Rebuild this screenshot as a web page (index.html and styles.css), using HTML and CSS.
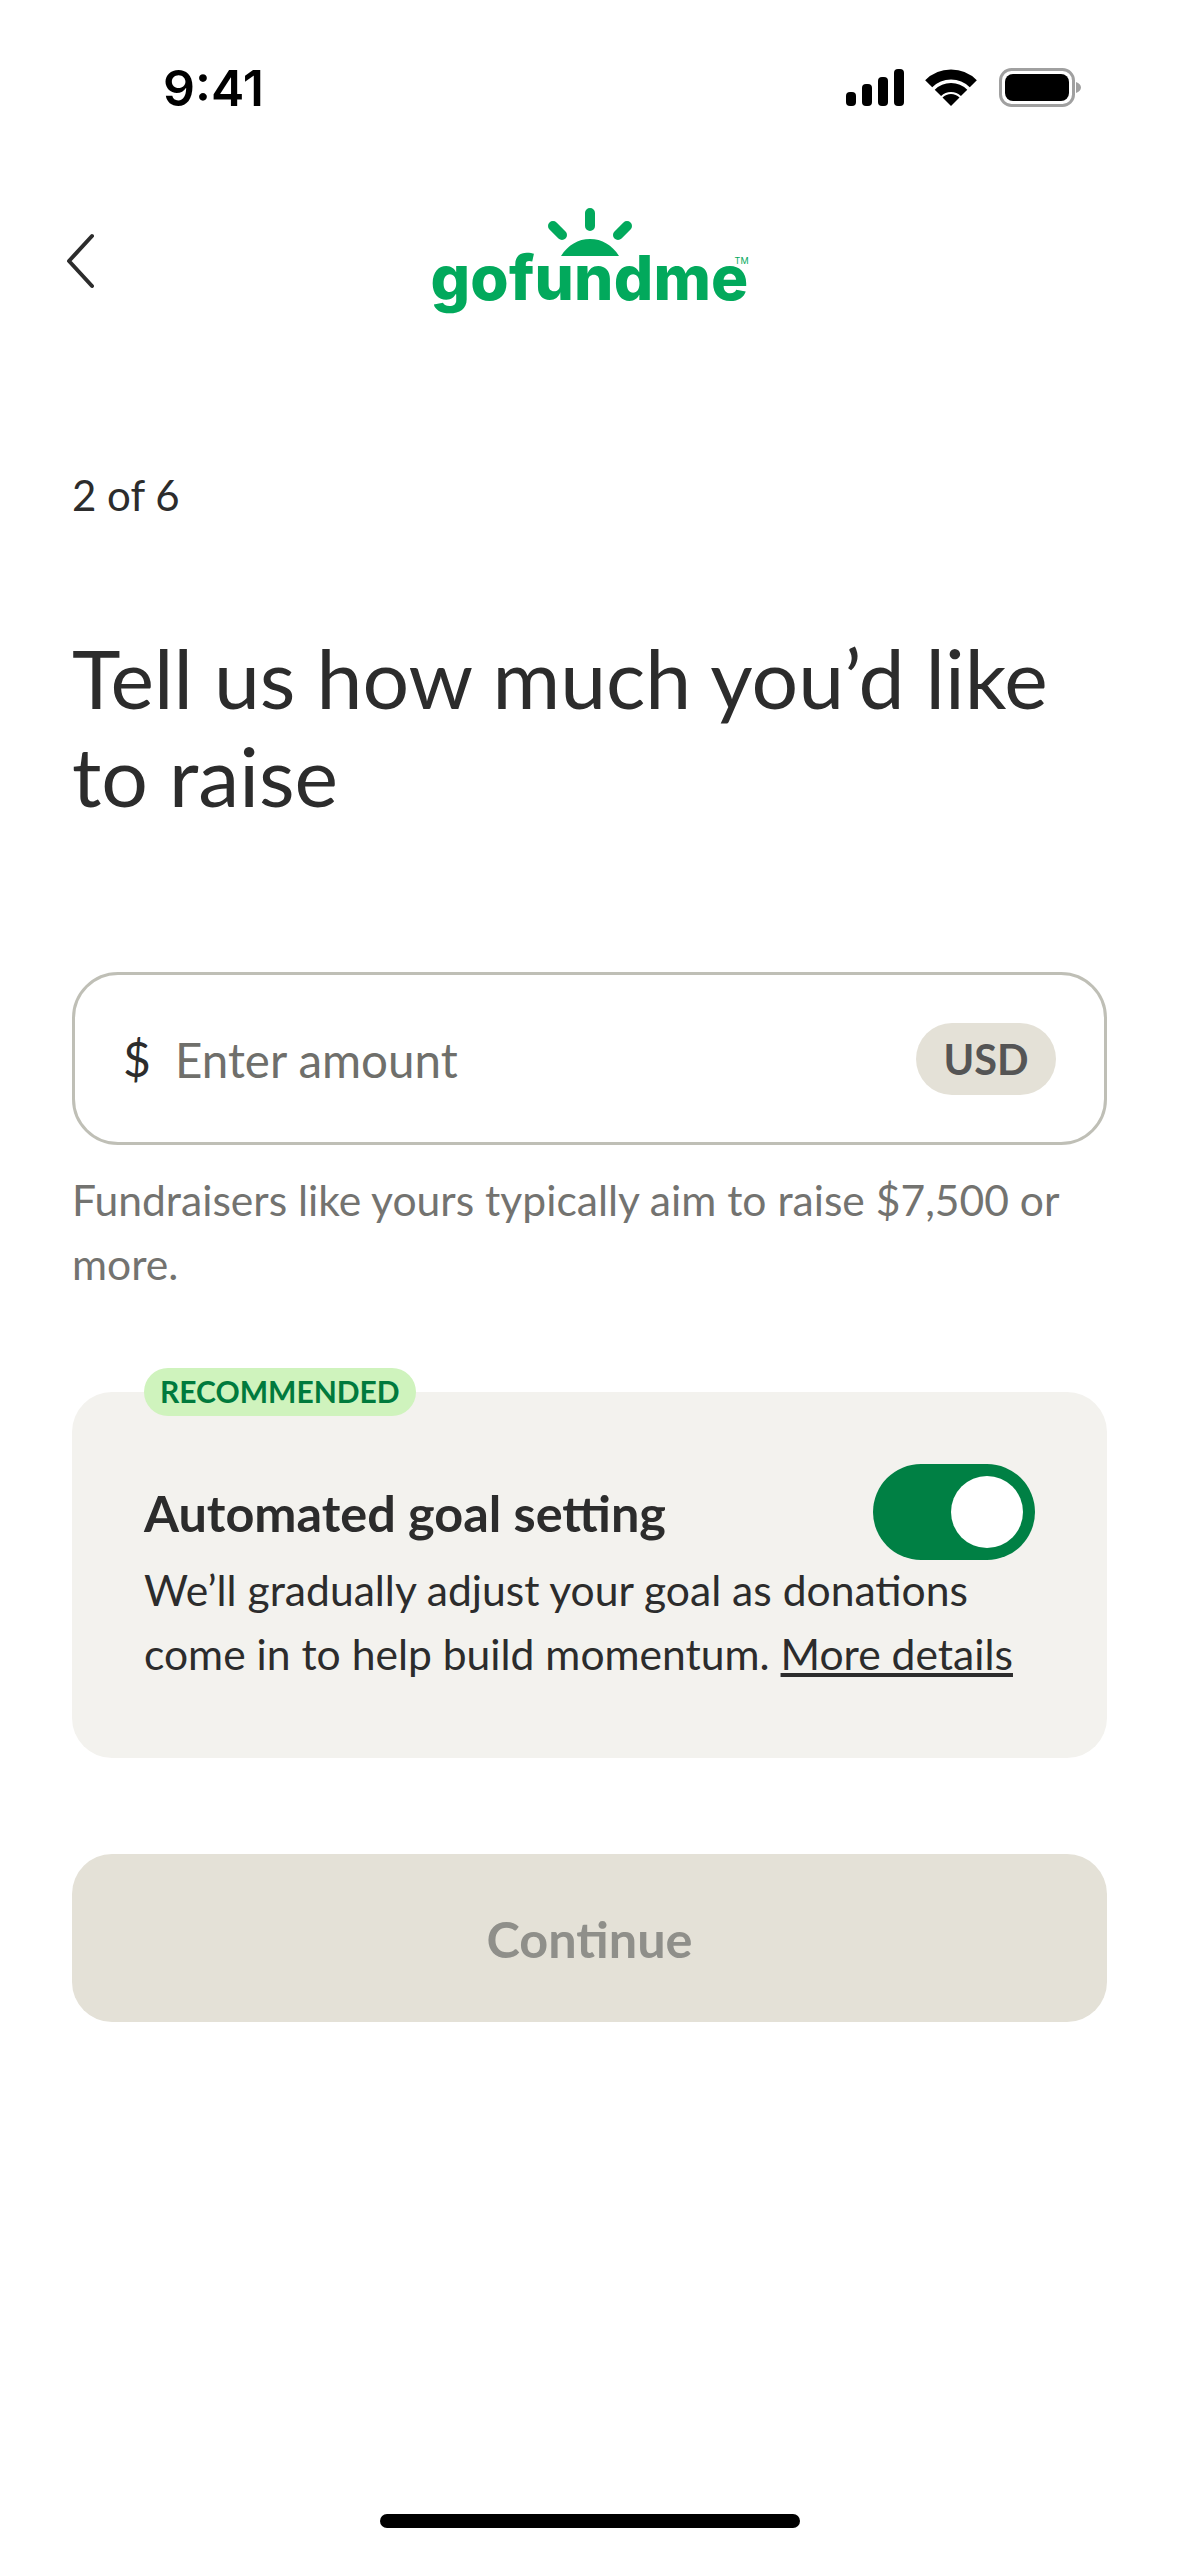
FILE: index.html
```html
<!DOCTYPE html>
<html lang="en">
<head>
    <meta charset="UTF-8">
    <meta name="viewport" content="width=device-width, initial-scale=1.0">
    <title>GoFundMe - Set your goal</title>
    <link rel="stylesheet" href="styles.css">
</head>
<body>
    <div class="screen">
        <div class="status-bar">
            <span class="time">9:41</span>
            <svg class="status-icons" viewBox="0 0 236 40" width="236" height="40">
                <rect x="0" y="24" width="10" height="14" rx="4"/>
                <rect x="16" y="16" width="10" height="22" rx="4"/>
                <rect x="32" y="9" width="10" height="29" rx="4"/>
                <rect x="48" y="1" width="10" height="37" rx="4"/>
                <path d="M82.7 15.7A31.5 31.5 0 0 1 127.3 15.7" fill="none" stroke="#000" stroke-width="10"/>
                <path d="M91.9 24.9A18.5 18.5 0 0 1 118.1 24.9" fill="none" stroke="#000" stroke-width="9"/>
                <path d="M105 38L96.5 29.5A12 12 0 0 1 113.5 29.5Z"/>
                <rect x="154.5" y="1.5" width="73" height="36" rx="11" fill="none" stroke="#a0a0a0" stroke-width="3"/>
                <rect x="159" y="6" width="64" height="27" rx="8"/>
                <path d="M230 14C233 15 235 17 235 19.5S233 24 230 25Z" fill="#a0a0a0"/>
            </svg>
        </div>

        <div class="top-nav">
            <svg class="back" viewBox="0 0 32 56" width="32" height="56">
                <path d="M28 3L5 28L28 53" fill="none" stroke="#2c2c2c" stroke-width="4" stroke-linecap="round" stroke-linejoin="round"/>
            </svg>
            <div class="logo">
                <svg class="logo-sun" viewBox="0 0 84 50" width="84" height="50">
                    <path d="M42 7V20M5 20L14 29M79 20L70 29" stroke="#02a95c" stroke-width="10" stroke-linecap="round"/>
                    <path d="M13 50C20 39 30 33 42 33S64 39 71 50Z" fill="#02a95c"/>
                </svg>
                <span class="logo-word">gofundme</span>
                <span class="logo-tm">TM</span>
            </div>
        </div>

        <main class="content">
            <p class="step">2 of 6</p>
            <h1 class="title">Tell us how much you’d like to raise</h1>

            <div class="amount-field">
                <span class="currency">$</span>
                <span class="placeholder">Enter amount</span>
                <span class="usd">USD</span>
            </div>
            <p class="hint">Fundraisers like yours typically aim to raise $7,500 or more.</p>

            <section class="goal-card">
                <span class="badge">RECOMMENDED</span>
                <div class="goal-head">
                    <h2 class="goal-title">Automated goal setting</h2>
                    <div class="toggle"><div class="knob"></div></div>
                </div>
                <p class="goal-text">We’ll gradually adjust your goal as donations come in to help build momentum. <a href="#" class="more">More details</a></p>
            </section>

            <button type="button" class="continue">Continue</button>
        </main>

        <div class="home-bar"></div>
    </div>
</body>
</html>
```

FILE: styles.css
```css
* {
    box-sizing: border-box;
}
body {
    margin: 0;
    background-color: #fff;
    font-family: Lato, Arial, sans-serif;
    color: #2c2c2c;
}
.screen {
    width: 1179px;
    height: 2556px;
    display: flex;
    flex-direction: column;
}
.status-bar {
    height: 198px;
    padding: 68px 97px 0 163px;
    display: flex;
    justify-content: space-between;
    align-items: flex-start;
}
.time {
    font-family: Inter, Arial, sans-serif;
    font-size: 50px;
    line-height: 40px;
    font-weight: 600;
    color: #000;
}
.top-nav {
    height: 122px;
    padding-left: 64px;
    display: grid;
    grid-template-columns: 1fr auto 1fr;
    align-items: center;
}
.back {
    display: block;
    margin-top: 3px;
}
.logo {
    grid-column: 2;
    display: flex;
    flex-direction: column;
    align-items: center;
    margin-left: -64px;
    position: relative;
}
.logo-sun {
    display: block;
    margin-bottom: -13px;
}
.logo-word {
    font-family: Inter, Arial, sans-serif;
    font-size: 62px;
    line-height: 70px;
    font-weight: 800;
    letter-spacing: 0.2px;
    color: #02a95c;
}
.logo-tm {
    position: absolute;
    top: 50px;
    right: 0;
    font-family: Inter, Arial, sans-serif;
    font-size: 9px;
    line-height: 9px;
    color: #02a95c;
}
.content {
    padding: 0 72px;
}
.step {
    margin: 150px 0 0;
    font-size: 42px;
    line-height: 50px;
}
.title {
    margin: 109px 0 0;
    font-size: 82.3px;
    line-height: 98px;
    font-weight: 400;
}
.amount-field {
    margin-top: 147px;
    height: 173px;
    padding: 0 48px;
    display: flex;
    align-items: center;
    justify-content: flex-start;
    border: 3px solid #bfbfb6;
    border-radius: 46px;
}
.currency {
    font-size: 48px;
    width: 52px;
}
.placeholder {
    margin-right: auto;
    padding-top: 2px;
    font-size: 47.5px;
    color: #6f6f6b;
}
.usd {
    width: 140px;
    height: 72px;
    display: flex;
    align-items: center;
    justify-content: center;
    border-radius: 36px;
    background-color: #e4e1d7;
    color: #555;
    font-size: 41.5px;
    font-weight: 700;
}
.hint {
    margin: 23px 0 0;
    font-size: 42.6px;
    line-height: 64px;
    color: #737370;
}
.goal-card {
    margin-top: 96px;
    height: 366px;
    padding: 72px 72px 0;
    border-radius: 40px;
    background-color: #f3f2ee;
    position: relative;
}
.badge {
    position: absolute;
    top: -24px;
    left: 72px;
    height: 48px;
    padding: 0 16px 2px;
    display: flex;
    align-items: center;
    border-radius: 24px;
    background-color: #cff3bd;
    color: #007a3d;
    font-size: 30px;
    font-weight: 700;
}
.goal-head {
    height: 96px;
    display: flex;
    justify-content: space-between;
    align-items: center;
}
.goal-title {
    margin: 0;
    font-size: 50.4px;
    font-weight: 700;
}
.toggle {
    width: 162px;
    height: 96px;
    padding: 12px;
    display: flex;
    justify-content: flex-end;
    border-radius: 48px;
    background-color: #008044;
}
.knob {
    width: 72px;
    height: 72px;
    border-radius: 50%;
    background-color: #fff;
}
.goal-text {
    margin: -2px 0 0;
    font-size: 42.6px;
    line-height: 64px;
}
.more {
    color: #2c2c2c;
    text-decoration: underline;
}
.continue {
    display: block;
    width: 100%;
    height: 168px;
    margin-top: 96px;
    border: none;
    border-radius: 40px;
    background-color: #e4e1d7;
    color: #8f8f8a;
    font-family: inherit;
    font-size: 50.4px;
    font-weight: 700;
}
.home-bar {
    width: 420px;
    height: 14px;
    margin: auto auto 28px;
    border-radius: 7px;
    background-color: #000;
}
```
